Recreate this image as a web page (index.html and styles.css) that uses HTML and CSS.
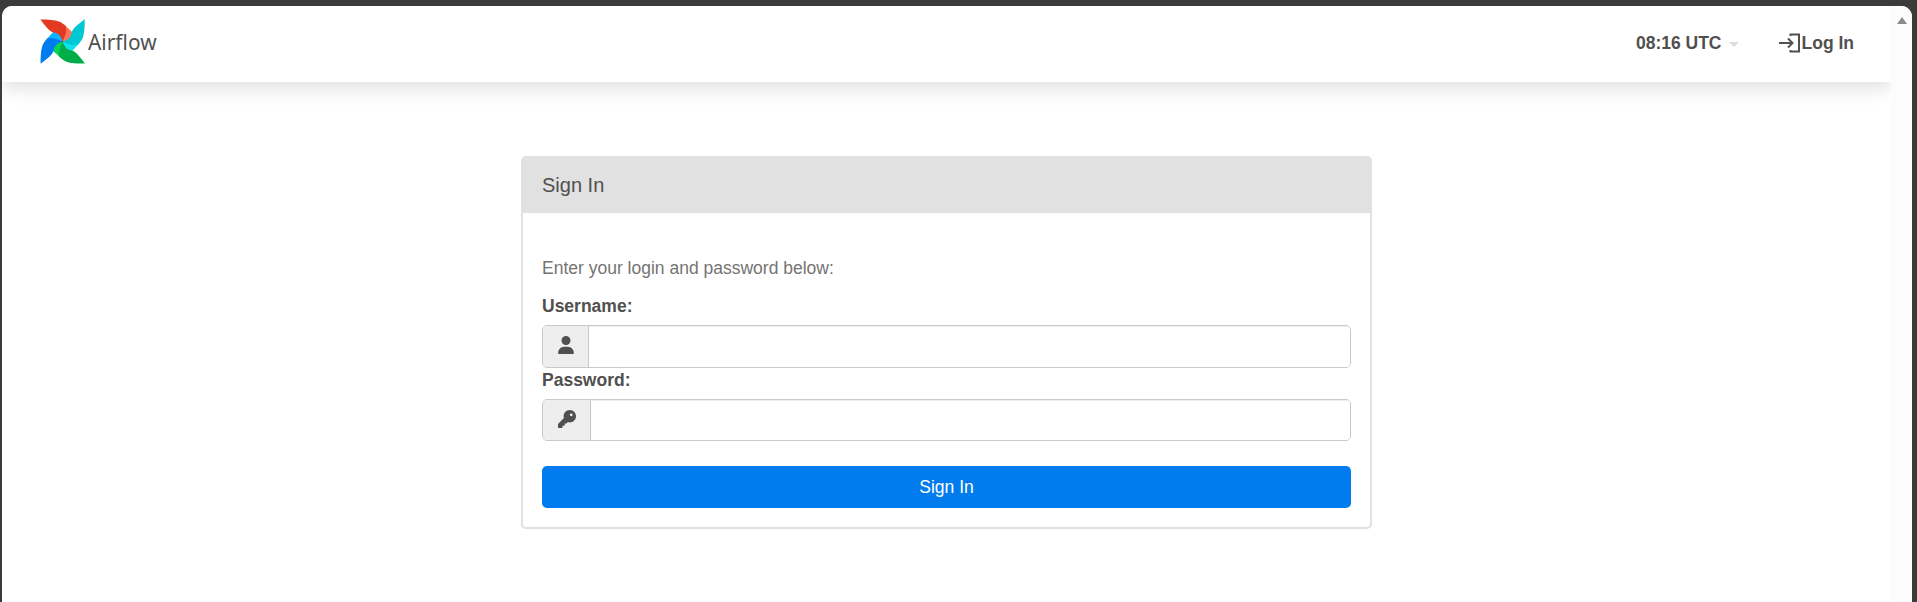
FILE: index.html
```html
<!DOCTYPE html>
<html lang="en">
<head>
<meta charset="utf-8">
<title>Sign In - Airflow</title>
<link rel="stylesheet" href="styles.css">
</head>
<body>
<div class="window">
  <div class="page">
    <header class="navbar">
      <a class="brand">
        <svg class="logo" viewBox="120 57 135 134">
          <defs>
            <path id="lobe" d="M185 70L196 77L215 94L217 99C217 115 207 122 188 124Z"/>
            <path id="petal" d="M121 58C145 57 170 60 180 65C188 70 195 75 198 79C201 95 194 111 188 124C183 108 175 98 160 97C145 91 136 77 121 58Z"/>
          </defs>
          <use href="#lobe" fill="#ff7557"/>
          <use href="#lobe" fill="#11e1ee" transform="rotate(90 188 124)"/>
          <use href="#lobe" fill="#04d659" transform="rotate(180 188 124)"/>
          <use href="#lobe" fill="#0cb6ff" transform="rotate(270 188 124)"/>
          <use href="#petal" fill="#e43921"/>
          <use href="#petal" fill="#00c7d4" transform="rotate(90 188 124)"/>
          <use href="#petal" fill="#00ad46" transform="rotate(180 188 124)"/>
          <use href="#petal" fill="#017cee" transform="rotate(270 188 124)"/>
          <circle cx="188" cy="124" r="2.5" fill="#51504f"/>
        </svg>
        <span class="brand-name">Airflow</span>
      </a>
      <nav class="nav">
        <a class="clock">08:16 UTC<span class="caret"></span></a>
        <a class="login"><svg class="login-icon" viewBox="0 0 22 20"><path fill="none" stroke="#51504f" stroke-width="2" d="M11.500 3V1.500H20V18.500H11.500V17M0 10H13.500M9 5.500L13.500 10L9 14.500"/></svg>Log In</a>
      </nav>
    </header>
    <main class="content">
      <section class="panel">
        <h1 class="panel-title">Sign In</h1>
        <form class="panel-body">
          <p class="hint">Enter your login and password below:</p>
          <label class="label" for="username">Username:</label>
          <div class="group group-user">
            <span class="addon"><svg class="user-icon" viewBox="0 0 448 512"><path fill="currentColor" d="M224 256a128 128 0 1 0 0-256a128 128 0 1 0 0 256zm-45.700 48C79.800 304 0 383.800 0 482.300C0 498.700 13.300 512 29.700 512H418.300c16.400 0 29.700-13.300 29.700-29.700C448 383.800 368.200 304 269.700 304H178.300z"/></svg></span>
            <input class="field" id="username" type="text">
          </div>
          <label class="label" for="password">Password:</label>
          <div class="group">
            <span class="addon"><svg class="key-icon" viewBox="0 0 512 512"><path fill="currentColor" d="M336 352c97.200 0 176-78.800 176-176S433.200 0 336 0S160 78.800 160 176c0 18.700 2.900 36.800 8.300 53.700L7 391c-4.500 4.500-7 10.600-7 17v80c0 13.300 10.700 24 24 24h80c13.300 0 24-10.700 24-24V448h40c13.300 0 24-10.700 24-24V384h40c6.400 0 12.500-2.500 17-7l33.300-33.300c16.900 5.400 35 8.300 53.700 8.300zM376 96a40 40 0 1 1 0 80a40 40 0 1 1 0-80z"/></svg></span>
            <input class="field" id="password" type="password">
          </div>
          <button class="submit" type="button">Sign In</button>
        </form>
      </section>
    </main>
  </div>
  <div class="scrollbar"><span class="scroll-up"></span></div>
</div>
</body>
</html>
```
FILE: styles.css
```css
* { box-sizing: border-box; }
body {
  margin: 0;
  height: 602px;
  padding: 6px 5px 0 2px;
  overflow: hidden;
  background: #3b3b3b;
  color: #51504f;
  font: 17.5px/25px "Liberation Sans", Arial, sans-serif;
}
.window {
  display: flex;
  height: 596px;
  background: #fff;
  border-radius: 10px 11px 0 0;
  overflow: hidden;
}
.page { flex: 1; overflow: hidden; }
.navbar {
  display: flex;
  justify-content: space-between;
  height: 76px;
  padding: 0 37px 0 38px;
  background: #fff;
  box-shadow: 0 6px 18px rgba(0, 0, 0, .13);
}
.brand { display: flex; padding-top: 13px; }
.logo { width: 45px; height: 45px; }
.brand-name {
  margin: 8px 0 0 3px;
  font: 20.9px/30px "Noto Sans", sans-serif;
}
.nav { display: flex; height: 74px; align-items: center; font-weight: bold; }
.clock { display: flex; align-items: center; margin-right: 40px; }
.caret {
  margin: 2px 0 0 7px;
  border: 5px solid transparent;
  border-top-color: #e2d9e2;
  border-bottom: 0;
}
.login { display: flex; align-items: center; }
.login-icon { width: 22px; height: 20px; margin-right: 1px; }
.content { padding: 74px 0 0 519px; }
.panel {
  width: 851px;
  height: 373px;
  border: 2px solid #e1e1e1;
  border-radius: 5px;
}
.panel-title {
  margin: 0;
  height: 55px;
  padding: 15px 19px 0;
  background: #e1e1e1;
  font-size: 20px;
  line-height: 25px;
  font-weight: normal;
}
.panel-body { display: flex; flex-direction: column; padding: 43px 19px 0; }
.hint { margin: 0 0 13px; color: #757473; }
.label { font-weight: bold; line-height: 25px; margin-bottom: 6px; }
.group {
  display: flex;
  height: 42px;
  border: 1px solid #c8c8c8;
  border-radius: 5px;
  overflow: hidden;
}
.group-user { height: 43px; }
.addon {
  display: flex;
  align-items: center;
  padding: 0 14px 0 15px;
  background: #eee;
  border-right: 1px solid #c8c8c8;
}
.user-icon { width: 16px; height: 18px; margin-top: -3px; }
.key-icon { width: 18px; height: 18px; margin-top: -2px; }
.field {
  flex: 1;
  min-width: 0;
  border: 0;
  outline: 0;
  padding: 0 15px;
  font: inherit;
  box-shadow: inset 0 1px 1px rgba(0, 0, 0, .075);
}
.submit {
  height: 42px;
  margin-top: 25px;
  border: 0;
  border-radius: 5px;
  background: #017cee;
  color: #fff;
  font: inherit;
}
.scrollbar { display: flex; justify-content: center; width: 21px; background: #fcfcfc; }
.scroll-up {
  width: 0;
  height: 0;
  margin-top: 11px;
  border: 5.500px solid transparent;
  border-top: 0;
  border-bottom: 7px solid #8b8b8b;
}
```
